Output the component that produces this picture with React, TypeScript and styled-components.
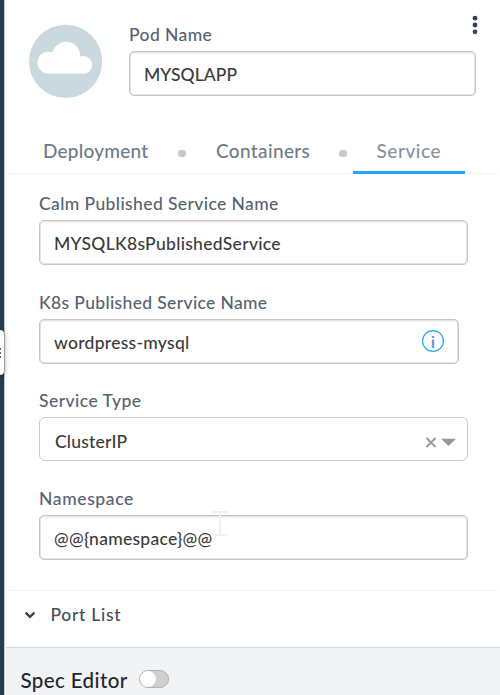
import React from 'react';
import styled, { createGlobalStyle, css } from 'styled-components';

const Global = createGlobalStyle`
  * { box-sizing: border-box; }
  body { margin: 0; background: #fff; overflow: hidden; font-family: Lato, "Open Sans", sans-serif; font-weight: 500; }
`;

const Screen = styled.div`
  display: flex;
  width: 500px;
  height: 695px;
  position: relative;
  overflow: hidden;
  background: #fff;
`;

const Rail = styled.div`
  flex: none;
  width: 5px;
  margin-right: 1px;
  border-right: 1px solid #c3c8cd;
  background: #293b50;
`;

const Handle = styled.div`
  position: absolute;
  left: -8px;
  top: 330px;
  width: 12px;
  height: 45px;
  border-radius: 4px;
  background: #fff;
  box-shadow: 0 1px 5px rgba(0, 0, 0, 0.45);
  display: flex;
  flex-direction: column;
  align-items: flex-end;
  justify-content: center;
  gap: 2px;
  padding-right: 3px;
`;

const Grip = styled.span`
  width: 3px;
  height: 2px;
  background: #666;
`;

const Panel = styled.main`
  flex: 1;
  display: flex;
  flex-direction: column;
  min-width: 0;
`;

const Header = styled.header`
  display: flex;
  align-items: flex-start;
  height: 129px;
  padding: 24px 24px 0 23px;
  position: relative;
`;

const Avatar = styled.svg`
  flex: none;
  width: 74px;
  height: 74px;
  margin-right: 26px;
`;

const MenuButton = styled.svg`
  position: absolute;
  left: 465px;
  top: 14px;
  width: 8px;
  height: 22px;
`;

const Field = styled.section<{ $narrow?: boolean }>`
  flex: 1;
  width: ${p => (p.$narrow ? 420 : 429)}px;
`;

const Text = styled.span<{ $track: number }>`
  white-space: nowrap;
  letter-spacing: ${p => p.$track}px;
`;

const Label = styled.div`
  height: 27px;
  padding-top: 1px;
  line-height: 20px;
  font-size: 17.5px;
  color: #566273;
`;

const boxBase = css`
  display: flex;
  align-items: center;
  font-size: 17.5px;
  color: #3b3b3b;
  background: #fff;
`;

const InputBox = styled.div`
  ${boxBase}
  height: 45px;
  padding: 1px 15px 0 14px;
  border: 1px solid #c0c6cb;
  border-radius: 5px;
  box-shadow: inset 0 0 0 1px #e2e6e9, inset 0 2px 1px rgba(0, 0, 0, 0.04);
  justify-content: space-between;
`;

const SelectBox = styled.div`
  ${boxBase}
  height: 44px;
  padding: 5px 11px 0 15px;
  border: 1px solid #c9c9c9;
  border-radius: 6px;
`;

const SelectIcons = styled.svg`
  width: 32px;
  height: 12px;
  margin-left: auto;
`;

const InfoIcon = styled.svg`
  width: 22px;
  height: 22px;
  margin-top: -2px;
  margin-right: -1px;
`;

const Tabs = styled.nav`
  display: flex;
  width: 492px;
  height: 45px;
  border-bottom: 1px solid #f0f1f2;
  padding-left: 37px;
  font-size: 19px;
  line-height: 43px;
  color: #707b84;
`;

const Tab = styled.div<{ $width: number; $active?: boolean }>`
  flex: none;
  width: ${p => p.$width}px;
  height: 45px;
  ${p => p.$active && css`
    color: #87929b;
    padding-left: 23.5px;
    border-bottom: 3px solid #22a5f7;
  `}
`;

const Dot = styled.i<{ $gap: number }>`
  flex: none;
  width: 8px;
  height: 7px;
  margin-top: 21px;
  margin-right: ${p => p.$gap}px;
  border-radius: 3px;
  background: #c9c9c9;
`;

const Form = styled.div`
  display: grid;
  grid-template-rows: 99px 98px 98px 1fr;
  height: 416px;
  padding: 19px 0 0 33px;
`;

const Divider = styled.div`
  width: 492px;
  height: 1px;
  background: #f0f1f2;
`;

const PortRow = styled.div`
  display: flex;
  align-items: center;
  height: 57px;
  border-bottom: 1px solid #d3d8dc;
  padding: 0 0 10px 18px;
  font-size: 17.5px;
  color: #454f5b;
`;

const Chevron = styled.svg`
  width: 12px;
  height: 10px;
  margin-right: 14.5px;
  position: relative;
  top: 1px;
`;

const Footer = styled.footer`
  flex: 1;
  display: flex;
  align-items: flex-start;
  padding: 20px 0 0 14.5px;
  background: #f2f3f5;
  color: #22272d;
  font-size: 20.5px;
  line-height: 24px;
`;

const Toggle = styled.div`
  width: 30px;
  height: 18px;
  margin: 2px 0 0 11px;
  border: 1px solid #b1b1b1;
  border-radius: 9px;
  background: #cfcfcf;
`;

const Knob = styled.div`
  width: 16px;
  height: 16px;
  border-radius: 50%;
  background: #fff;
`;

const Cursor = styled.svg`
  position: absolute;
  left: 212px;
  top: 511px;
  width: 16px;
  height: 25px;
`;

export default function App() {
  return (
    <Screen>
      <Global />
      <Rail />
      <Panel>
        <Header>
          <Avatar viewBox="0 0 74 74">
            <circle cx="36.6" cy="37.4" r="36.6" fill="#cad8df" />
            <path d="M18 49.6A11 11 0 1 1 23.6 28.5A14 14 0 0 1 51.2 32.4A9 9 0 1 1 57 49.6Z" fill="#fff" />
          </Avatar>
          <Field>
            <Label><Text $track={0.4}>Pod Name</Text></Label>
            <InputBox><Text $track={0.05}>MYSQLAPP</Text></InputBox>
          </Field>
          <MenuButton viewBox="0 0 8 22" fill="#37414d">
            <circle cx="4" cy="4.2" r="2.4" /><circle cx="4" cy="11" r="2.4" /><circle cx="4" cy="17.8" r="2.4" />
          </MenuButton>
        </Header>
        <Tabs>
          <Tab $width={135}><Text $track={0.22}>Deployment</Text></Tab>
          <Dot $gap={30} />
          <Tab $width={123}><Text $track={0.36}>Containers</Text></Tab>
          <Dot $gap={6} />
          <Tab $width={112} $active><Text $track={0.55}>Service</Text></Tab>
        </Tabs>
        <Form>
          <Field>
            <Label><Text $track={0.4}>Calm Published Service Name</Text></Label>
            <InputBox><Text $track={0.3}>MYSQLK8sPublishedService</Text></InputBox>
          </Field>
          <Field $narrow>
            <Label><Text $track={0.35}>K8s Published Service Name</Text></Label>
            <InputBox>
              <Text $track={0.28}>wordpress-mysql</Text>
              <InfoIcon viewBox="0 0 22 22" fill="none">
                <circle cx="11" cy="11" r="10.4" stroke="#22a5f7" strokeWidth="1.2" />
                <path d="M11 9.6V18M11 6V8" stroke="#6f9ce0" strokeWidth="2.4" />
              </InfoIcon>
            </InputBox>
          </Field>
          <Field>
            <Label><Text $track={0.46}>Service Type</Text></Label>
            <SelectBox>
              <Text $track={0.2}>ClusterIP</Text>
              <SelectIcons viewBox="0 0 32 12">
                <path d="M2.5 2L11.5 11M11.5 2L2.5 11" stroke="#999" strokeWidth="2" />
                <path d="M17 2.8H32L24.5 10Z" fill="#999" />
              </SelectIcons>
            </SelectBox>
          </Field>
          <Field>
            <Label><Text $track={0.63}>Namespace</Text></Label>
            <InputBox><Text $track={0.28}>@@&#123;namespace&#125;@@</Text></InputBox>
          </Field>
        </Form>
        <Divider />
        <PortRow>
          <Chevron viewBox="0 0 12 10"><path d="M1.6 2.6L6 6.8L10.4 2.6" fill="none" stroke="#37414d" strokeWidth="2.3" /></Chevron>
          <Text $track={0.7}>Port List</Text>
        </PortRow>
        <Footer>
          <Text $track={0.4}>Spec Editor</Text>
          <Toggle><Knob /></Toggle>
        </Footer>
      </Panel>
      <Handle><Grip /><Grip /><Grip /></Handle>
      <Cursor viewBox="0 0 16 25"><path d="M1 1H15M8 1V24M1 24H15" fill="none" stroke="#ececec" strokeWidth="1.6" /></Cursor>
    </Screen>
  );
}
